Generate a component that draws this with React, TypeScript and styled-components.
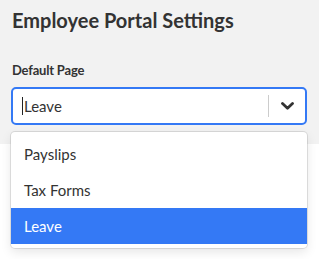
import React from "react";
import styled, { createGlobalStyle } from "styled-components";

const Global = createGlobalStyle`
  html, body { margin: 0; padding: 0; background: #ffffff; }
  body { font-family: "Lato", "Noto Sans", sans-serif; color: #333333; }
  * { box-sizing: border-box; }
`;

const Page = styled.div`
  width: 319px;
  height: 259px;
  background: #ffffff;
  overflow: hidden;
`;

const Panel = styled.section`
  background: #f2f2f2;
  padding: 8px 12px 20px 11px;
  position: relative;
  height: 144px;
`;

const Title = styled.h2`
  margin: 0 0 0 1px;
  font-size: 20px;
  line-height: 24px;
  font-weight: 700;
  color: #333333;
`;

const Label = styled.label`
  display: block;
  margin: 29px 0 8px 1px;
  font-size: 13px;
  line-height: 18px;
  font-weight: 700;
  letter-spacing: -0.2px;
  color: #333333;
`;

const SelectWrap = styled.div`
  position: relative;
  width: 296px;
`;

const Control = styled.div`
  display: flex;
  align-items: stretch;
  height: 38px;
  background: #ffffff;
  border: 2px solid #3479f5;
  border-radius: 5px;
`;

const ValueArea = styled.div`
  flex: 1;
  display: flex;
  align-items: center;
  padding: 0 9px;
  font-size: 15px;
  color: #333333;
`;

const Caret = styled.span`
  display: inline-block;
  width: 1px;
  height: 18px;
  background: #222222;
  margin-right: 1px;
`;

const Separator = styled.span`
  width: 1px;
  align-self: stretch;
  margin: 6px 0;
  background: #cccccc;
`;

const Indicator = styled.div`
  width: 36px;
  display: flex;
  align-items: center;
  justify-content: center;
  color: #333333;
`;

const Menu = styled.ul`
  position: absolute;
  left: 0;
  right: 0;
  top: 45px;
  margin: 0;
  padding: 4px 0;
  list-style: none;
  background: #ffffff;
  border-radius: 4px;
  box-shadow: 0 0 0 1px rgba(0, 0, 0, 0.1), 0 4px 11px rgba(0, 0, 0, 0.1);
  z-index: 2;
`;

const Option = styled.li<{ $selected?: boolean }>`
  height: 36px;
  display: flex;
  align-items: center;
  padding: 0 13px;
  font-size: 15px;
  color: ${(p) => (p.$selected ? "#ffffff" : "#333333")};
  background: ${(p) => (p.$selected ? "#3479f5" : "transparent")};
`;

const options = ["Payslips", "Tax Forms", "Leave"];

export default function App() {
  const value = "Leave";
  return (
    <Page>
      <Global />
      <Panel>
        <Title>Employee Portal Settings</Title>
        <Label>Default Page</Label>
        <SelectWrap>
          <Control>
            <ValueArea>
              <Caret />
              {value}
            </ValueArea>
            <Separator />
            <Indicator>
              <svg width="13" height="8" viewBox="0 0 13 8" fill="none">
                <path
                  d="M1.5 1.5 L6.5 6.2 L11.5 1.5"
                  stroke="#333333"
                  strokeWidth="2.8"
                  strokeLinecap="round"
                  strokeLinejoin="round"
                />
              </svg>
            </Indicator>
          </Control>
          <Menu>
            {options.map((o) => (
              <Option key={o} $selected={o === value}>
                {o}
              </Option>
            ))}
          </Menu>
        </SelectWrap>
      </Panel>
    </Page>
  );
}
